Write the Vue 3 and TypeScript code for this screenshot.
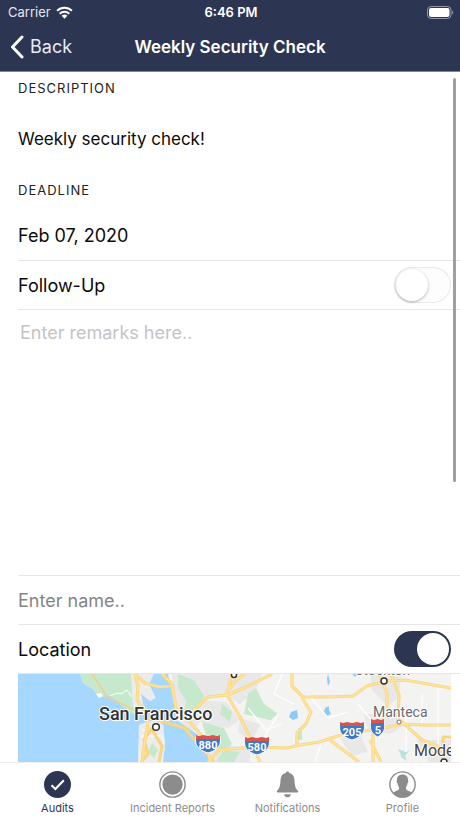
<script setup lang="ts">
import { ref } from 'vue'

type TabIcon = 'check' | 'record' | 'bell' | 'person'

interface Tab {
  label: string
  icon: TabIcon
}

const tabs: Tab[] = [
  { label: 'Audits', icon: 'check' },
  { label: 'Incident Reports', icon: 'record' },
  { label: 'Notifications', icon: 'bell' },
  { label: 'Profile', icon: 'person' },
]

const activeTab = ref('Audits')
const followUp = ref(false)
const location = ref(true)
const remarks = ref('')
const name = ref('')
</script>

<template>
  <div class="screen">
    <header class="header">
      <div class="status">
        <span class="carrier">
          Carrier
          <svg class="wifi" viewBox="0 0 16 12" aria-hidden="true">
            <path d="M1 4.4a10 10 0 0 1 14 0" />
            <path d="M3.5 7.2a6.4 6.4 0 0 1 9 0" />
            <path class="solid" d="M8 11.9 5.3 9.1a3.9 3.9 0 0 1 5.4 0z" />
          </svg>
        </span>
        <span class="time">6:46 PM</span>
        <svg class="battery" viewBox="0 0 27 13" aria-label="Battery full">
          <rect class="shell" x="0.5" y="0.5" width="23.5" height="12" rx="3.5" />
          <rect class="level" x="2" y="2" width="20.5" height="9" rx="2" />
          <path class="tip" d="M25.2 4.5c1.6.5 1.6 3.500 0 4z" />
        </svg>
      </div>
      <nav class="navbar">
        <button class="back" type="button">
          <svg class="chevron" viewBox="0 0 14 24" aria-hidden="true">
            <path d="M12 2 2.500 12 12 22" />
          </svg>
          Back
        </button>
        <h1 class="title">Weekly Security Check</h1>
      </nav>
    </header>

    <main class="content">
      <h2 class="section">DESCRIPTION</h2>
      <p class="value description">Weekly security check!</p>
      <h2 class="section">DEADLINE</h2>
      <p class="value deadline">Feb 07, 2020</p>

      <div class="row">
        <label for="follow-up">Follow-Up</label>
        <input id="follow-up" v-model="followUp" class="switch" type="checkbox" role="switch" />
      </div>
      <div class="row remarks-row">
        <textarea v-model="remarks" class="remarks" aria-label="Remarks" placeholder="Enter remarks here.."></textarea>
      </div>
      <div class="row">
        <input v-model="name" class="name" type="text" aria-label="Name" placeholder="Enter name.." />
      </div>
      <div class="row">
        <label for="location">Location</label>
        <input id="location" v-model="location" class="switch" type="checkbox" role="switch" />
      </div>

      <div class="map-frame">
        <svg class="map" viewBox="0 0 433 88" preserveAspectRatio="xMidYMin slice" role="img" aria-label="Map of the San Francisco area">
          <rect width="433" height="88" fill="#f3f3f2" />
          <!-- urban areas -->
          <g fill="#e8e8e8">
            <path d="M154 0h60l-4 22-30 4-14 14-10-14z" />
            <path d="M214 0h30l-6 16-16 14-10-6z" />
            <path d="M158 40l22-14 28 2 14 18-12 8-28-6-10 14z" />
            <path d="M180 72h52v16h-46z" />
            <path d="M352 0h32l-4 24-10 8-16-16z" />
            <path d="M346 40h34l6 12-14 8-22-4z" />
            <path d="M322 64l20-4 8 18-16 4z" />
            <path d="M398 66h35v22h-22z" />
            <path d="M222 44l20 6-8 18-14-10z" />
          </g>
          <!-- parks -->
          <g fill="#c6e9cd">
            <path d="M160 0l16 6 10 16-4 12-12-4-10-16z" />
            <path d="M230 20l8-6 8 16 14 10-8 6-26-6z" />
            <path d="M184 48l22 6 8 16-8 8-16-10z" />
            <path d="M236 38l14 2 4 6-10-2z" />
            <path d="M204 30l10 8-2 10-10-8z" />
            <path d="M168 28l8 4-4 10-6-4z" />
            <path d="M280 54h4v12h-4z" />
            <path d="M206 76l16 2-6 10h-18z" />
          </g>
          <!-- ocean and bay -->
          <g fill="#a6d7ff">
            <path d="M0 0h62l3 9 10 6 6 8 12-2 8 7 9 8 12 3-1 12-1 37H0z" />
            <path d="M121 14l14-14h15l4 20 5 26 8 6 12 8 8 18 8 10h-50l2-20-2-14-6-5-16 3-7-4 4-12z" />
          </g>
          <path d="M62 0h55l3 26 9 9-8 7-12-5-8-8-9-7-11 1-6-8-10-6z" fill="#c6e9cd" />
          <path d="M113 0h23l-5 10 7 14-6 3-9-7 3 14-5 7-6-8z" fill="#ececeb" />
          <path d="M121 51l7-3 12-2 6 6-2 14 3 8-4 14h-20l-2-20z" fill="#ececeb" />
          <path d="M134 69l6 7-4 8-6-6z" fill="#c6e9cd" />
          <path d="M78 20l5-1 2 3-4 2z" fill="#fff" />
          <path d="M92 22l7-3 4 1 6-4 5 7" fill="none" stroke="#fff" stroke-width="1" />
          <!-- lakes -->
          <g fill="#8fc9f8">
            <path d="M273 38l6-2 1 8-5 2-4-3z" />
            <path d="M334 0h6l-3 3z" />
            <path d="M307 34l4-2v4l2 4-4 2-3-4z" />
            <path d="M310 0l2 8-2 4-1-7z" />
          </g>
          <path d="M380 75l8 3 4-2-5 6 2 5-5-3-2-5z" fill="#b9e3d6" />
          <!-- minor roads -->
          <g fill="none" stroke="#fff" stroke-width="1.200">
            <path d="M230 34l18 22 16-6M264 0l-8 20 20 10M240 74l20-34M290 20l20 24 20-6M305 64l-8 24M340 30l20 24M388 34v44M404 20v30M420 14v60M124 56h18M123 62h20" />
          </g>
          <!-- highways -->
          <g fill="none" stroke="#f8d67f" stroke-width="3.200" stroke-linejoin="round">
            <path d="M117 0l3 12-1 14 9 13 2 10-3 17-3 22M117 0l10 9 14 4 13-1M144 0l10 10 4 24 14 14 12 14 9 26M132 44l21 6 14 4 6 8 14 15 9 11M158 38l18 -2 14-13 18-2 8-13 11-8M214 0l-5 21 13 22 12 24 8 21M208 22l22-10 24-12" />
            <path d="M274 0v12l11 11h22l28-1 14-10 20-5 18-1 46 8M284 24l9 14-5 12-9 9v12M190 88l11-12 36-3 32 1 13-3 19-3 31-10 26-2 26-6 22 1h48M312 66l29 22M355 50v38M352 66l11 22M361 0l8 19v18M373 0l8 21-1 22M382 46l22 20 15 6 8 16M433 63h-8v18M134 54l-8 12 4 14-7 8M133 54l11 18-3 16" />
          </g>
          <g fill="none" stroke="#ffe29b" stroke-width="1.600" stroke-linejoin="round">
            <path d="M117 0l3 12-1 14 9 13 2 10-3 17-3 22M117 0l10 9 14 4 13-1M144 0l10 10 4 24 14 14 12 14 9 26M158 38l18 -2 14-13 18-2 8-13 11-8M214 0l-5 21 13 22 12 24 8 21M208 22l22-10 24-12" />
            <path d="M274 0v12l11 11h22l28-1 14-10 20-5 18-1 46 8M284 24l9 14-5 12-9 9v12M190 88l11-12 36-3 32 1 13-3 19-3 31-10 26-2 26-6 22 1h48M312 66l29 22M355 50v38M352 66l11 22M361 0l8 19v18M373 0l8 21-1 22M382 46l22 20 15 6 8 16" />
          </g>
          <path d="M74 0l7 10 8 13 15 7 12 6" fill="none" stroke="#f3cf83" stroke-width="1.500" />
          <!-- interstate shields -->
          <g>
            <path d="M178 62h24c2 9-2 14-12 17-10-3-14-8-12-17z" fill="#3f78c3" stroke="#fff" stroke-width="1" />
            <path d="M178 65v-4l3 1 4-1 5 1 5-1 4 1 3-1v4z" fill="#d9534f" />
            <path d="M227 64h24c2 9-2 14-12 17-10-3-14-8-12-17z" fill="#3f78c3" stroke="#fff" stroke-width="1" />
            <path d="M227 67v-4l3 1 4-1 5 1 5-1 4 1 3-1v4z" fill="#d9534f" />
            <path d="M322 49h24c2 9-2 14-12 17-10-3-14-8-12-17z" fill="#3f78c3" stroke="#fff" stroke-width="1" />
            <path d="M322 52v-4l3 1 4-1 5 1 5-1 4 1 3-1v4z" fill="#d9534f" />
            <path d="M353 46h13c2 9 0 13-6.500 17-6.500-4-8.500-8-6.500-17z" fill="#3f78c3" stroke="#fff" stroke-width="1" />
            <path d="M353 49v-4l3 1 3.500-1 3.500 1 3-1v4z" fill="#d9534f" />
          </g>
          <g class="shield-text">
            <text x="190" y="75">880</text>
            <text x="239" y="77">580</text>
            <text x="334" y="62">205</text>
            <text x="360" y="60">5</text>
          </g>
          <!-- places -->
          <g fill="#fff" stroke="#333" stroke-width="1.500">
            <circle cx="138" cy="53" r="3.300" />
            <circle cx="366" cy="7" r="3" />
            <circle cx="426" cy="88" r="3" />
            <circle cx="216" cy="1" r="2.500" />
            <circle cx="381" cy="48" r="2" stroke="#777" stroke-width="1" />
          </g>
          <text class="place city" x="81" y="46">San Francisco</text>
          <text class="place town" x="355" y="43">Manteca</text>
          <text class="place modesto" x="396" y="82">Modesto</text>
          <text class="place town" x="337" y="1">Stockton</text>
        </svg>
      </div>
      <span class="scroll-thumb" aria-hidden="true"></span>
    </main>

    <nav class="tabs" aria-label="Sections">
      <button
        v-for="tab in tabs"
        :key="tab.label"
        type="button"
        class="tab"
        :class="{ active: tab.label === activeTab }"
        @click="activeTab = tab.label"
      >
        <svg class="tab-icon" viewBox="0 0 28 28" aria-hidden="true">
          <template v-if="tab.icon === 'check'">
            <circle cx="14" cy="14" r="14" fill="currentColor" />
            <path d="M7.800 14.800l4 3.800 8.800-9" fill="none" stroke="#fff" stroke-width="2.200" />
          </template>
          <template v-else-if="tab.icon === 'record'">
            <circle cx="14" cy="14" r="13.100" fill="none" stroke="currentColor" stroke-width="1.500" />
            <circle cx="14" cy="14" r="10.500" fill="currentColor" />
          </template>
          <template v-else-if="tab.icon === 'bell'">
            <path fill="currentColor" d="M14 .5c1 0 1.700.7 1.800 1.700 3.400.8 5.200 3.300 5.400 6.600.3 5.400.7 9.300 3.600 11.700.6.600.4 1.700-.5 1.700H3.700c-.9 0-1.100-1.100-.5-1.700 2.900-2.400 3.300-6.300 3.600-11.700.2-3.300 2-5.800 5.400-6.600C12.300 1.200 13 .5 14 .5zM10.500 24h7c-.3 2-1.600 3.300-3.500 3.300S10.800 26 10.500 24z" />
          </template>
          <template v-else>
            <circle cx="14" cy="14" r="13.100" fill="none" stroke="currentColor" stroke-width="1.500" />
            <path fill="currentColor" d="M14 3.600c4 0 6 2.400 5.700 6 .7.300.5 2.200-.5 3.200-.2 1.700-.8 3-1.500 3.800v2.300c1.200 1.800 4.300 1.800 6.300 3.600A13 13 0 0 1 14 27.500a13 13 0 0 1-10-5c2-1.800 5.100-1.800 6.300-3.600v-2.300c-.7-.8-1.300-2.100-1.500-3.800-1-1-1.200-2.900-.5-3.200-.3-3.600 1.700-6 5.700-6z" />
          </template>
        </svg>
        <span>{{ tab.label }}</span>
      </button>
    </nav>
  </div>
</template>

<style>
body {
  margin: 0;
  background: #fff;
}
</style>

<style scoped>
* {
  box-sizing: border-box;
}

.screen {
  display: flex;
  flex-direction: column;
  height: 100vh;
  font-family: Inter, "Liberation Sans", sans-serif;
  font-size: 18px;
  color: #0b0b0b;
  background: #fff;
}

button,
input,
textarea {
  margin: 0;
  padding: 0;
  border: 0;
  background: none;
  font: inherit;
  color: inherit;
}

.header {
  flex: none;
  color: #fff;
  background: #2c3653;
  border-bottom: 1px solid #7d82a0;
}

.status {
  display: grid;
  grid-template-columns: 1fr auto 1fr;
  align-items: center;
  height: 24px;
  padding: 0 6px 0 8px;
  font-size: 13px;
}

.carrier {
  display: flex;
  align-items: center;
  gap: 5px;
  color: #e4e6ee;
}

.wifi {
  width: 17px;
  height: 13px;
  fill: none;
  stroke: #fff;
  stroke-width: 2;
}

.wifi .solid {
  fill: #fff;
  stroke: none;
}

.time {
  font-weight: 600;
}

.battery {
  justify-self: end;
  width: 27px;
  height: 13px;
}

.shell {
  fill: none;
  stroke: #9298a9;
}

.level {
  fill: #fff;
}

.tip {
  fill: #9298a9;
}

.navbar {
  display: grid;
  grid-template-columns: 1fr auto 1fr;
  align-items: center;
  height: 47px;
  padding: 0 10px 2px;
}

.back {
  display: flex;
  align-items: center;
  justify-self: start;
  gap: 6px;
  color: #e9ebf4;
}

.chevron {
  width: 14px;
  height: 24px;
  fill: none;
  stroke: #fff;
  stroke-width: 3;
  stroke-linecap: round;
  stroke-linejoin: round;
}

.title {
  margin: 0;
  font-size: 17px;
  font-weight: 600;
}

.content {
  position: relative;
  flex: 1;
  min-height: 0;
  overflow: hidden;
  padding-left: 18px;
}

.section {
  margin: 0;
  font-size: 13px;
  font-weight: 400;
  line-height: 32px;
  letter-spacing: 1px;
  color: #222;
}

.value {
  margin: 0;
}

.description {
  font-size: 17px;
  line-height: 70px;
}

.deadline {
  padding-top: 6px;
  line-height: 48px;
}

.row {
  display: flex;
  align-items: center;
  justify-content: space-between;
  height: 49px;
  padding-right: 9px;
  border-top: 1px solid #e6e6e6;
}

.remarks-row {
  height: 266px;
}

.remarks {
  width: 100%;
  height: 100%;
  padding: 12px 2px;
  resize: none;
  outline: none;
}

.remarks::placeholder {
  color: #c4c4c6;
}

.name {
  width: 100%;
  outline: none;
}

.name::placeholder {
  color: #858585;
}

.switch {
  appearance: none;
  display: flex;
  align-items: center;
  width: 57px;
  height: 36px;
  padding: 2px;
  border-radius: 18px;
  background: #fdfdfd;
  box-shadow: inset 0 0 0 1px #e9e9e9;
}

.switch::before {
  content: "";
  width: 32px;
  height: 32px;
  border-radius: 50%;
  background: #fff;
  box-shadow: 0 1px 3px rgba(0, 0, 0, 0.3);
}

.switch:checked {
  justify-content: flex-end;
  background: #2c3653;
  box-shadow: none;
}

.switch:checked::before {
  box-shadow: none;
}

.map-frame {
  padding-right: 9px;
  border-top: 1px solid #e6e6e6;
}

.map {
  display: block;
  width: 100%;
  height: 88px;
}

.shield-text {
  font-family: Roboto, sans-serif;
  font-size: 11px;
  font-weight: 700;
  fill: #fff;
  text-anchor: middle;
}

.place {
  font-family: Roboto, sans-serif;
  paint-order: stroke;
  stroke: #fff;
  stroke-width: 2px;
  stroke-linejoin: round;
}

.city {
  font-size: 18px;
  font-weight: 500;
  fill: #333;
}

.town {
  font-size: 14px;
  fill: #6b6b6b;
}

.modesto {
  font-size: 16px;
  fill: #444;
}

.scroll-thumb {
  position: absolute;
  top: 6px;
  right: 4px;
  width: 3px;
  height: 404px;
  border-radius: 2px;
  background: #a0a0a0;
}

.tabs {
  display: grid;
  grid-template-columns: repeat(4, 1fr);
  flex: none;
  height: 56px;
  border-top: 1px solid #ececec;
  background: #fff;
}

.tab {
  display: flex;
  flex-direction: column;
  align-items: center;
  gap: 3px;
  padding-top: 8px;
  font-size: 11px;
  line-height: 14px;
  white-space: nowrap;
  color: #8c8c8c;
}

.tab.active {
  color: #2c3653;
}

.tab-icon {
  width: 27px;
  height: 27px;
}
</style>
